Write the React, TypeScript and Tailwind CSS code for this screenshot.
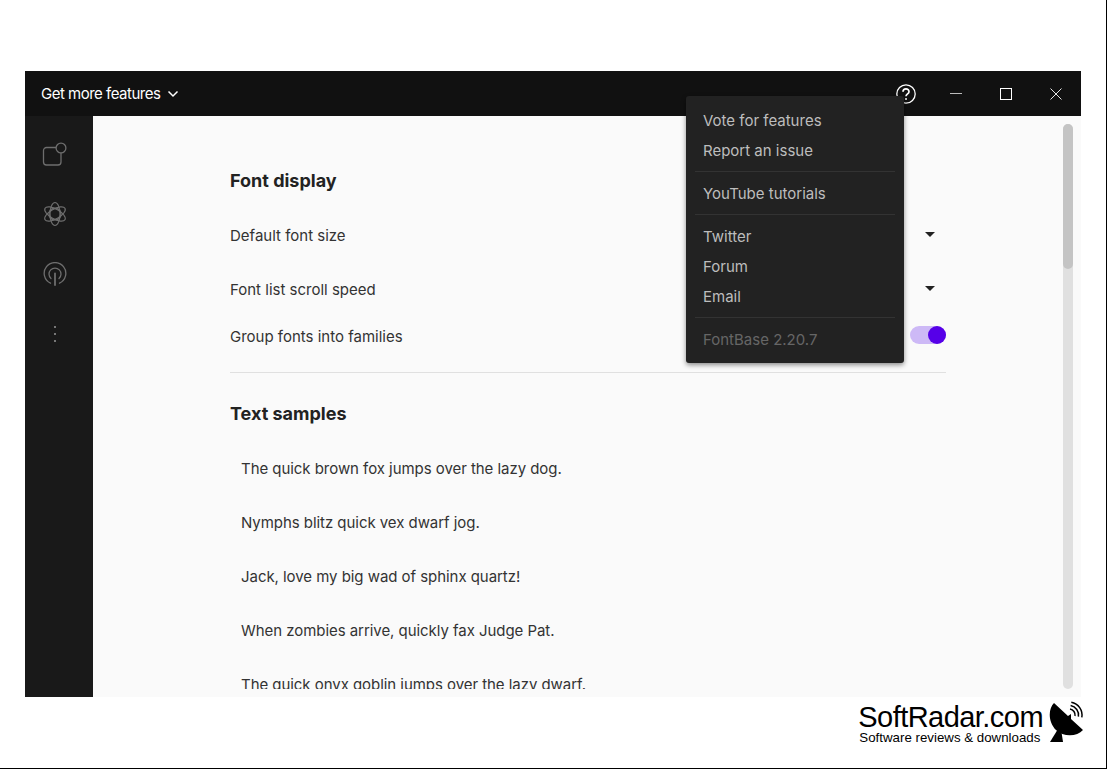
import React from 'react';

const samples = [
  'The quick brown fox jumps over the lazy dog.',
  'Nymphs blitz quick vex dwarf jog.',
  'Jack, love my big wad of sphinx quartz!',
  'When zombies arrive, quickly fax Judge Pat.',
  'The quick onyx goblin jumps over the lazy dwarf.',
];

const Caret = () => <div className="h-0 w-0 border-x-[5px] border-t-[5px] border-x-transparent border-t-[#222222]" />;

const SidebarIcons = () => (
  <div className="flex w-[60px] flex-col items-center text-[#6e6e6e]">
    {/* Shapes */}
    <svg width="26" height="26" viewBox="0 0 26 26" fill="none" stroke="currentColor" strokeWidth="1.3" className="mt-[26px]">
      <path d="M14 5.5H4.5a3 3 0 0 0-3 3V20a3 3 0 0 0 3 3H16a3 3 0 0 0 3-3V11" />
      <circle cx="19" cy="6" r="4.9" />
    </svg>
    {/* Atom */}
    <svg width="24" height="26" viewBox="0 0 24 26" fill="none" stroke="currentColor" strokeWidth="1.2" className="mt-[33px]">
      <ellipse cx="12" cy="13" rx="5" ry="11.5" transform="rotate(60 12 13)" />
      <ellipse cx="12" cy="13" rx="5" ry="11.5" transform="rotate(-60 12 13)" />
      <ellipse cx="12" cy="13" rx="5" ry="11.5" />
      <circle cx="12" cy="13" r="6" />
    </svg>
    {/* Broadcast */}
    <svg width="24" height="24" viewBox="0 0 24 24" fill="none" stroke="currentColor" strokeWidth="1.3" strokeLinecap="round" className="mt-[35px]">
      <path d="M7.5 21.2a10.8 10.8 0 1 1 9 0" />
      <path d="M8 16.5a6 6 0 1 1 8 0" />
      <path d="M12 11.5v11.5" strokeWidth="1.8" />
    </svg>
    <div className="mt-[40px] flex flex-col gap-[5px]">
      <div className="h-[2px] w-[2px] bg-[#777777]" />
      <div className="h-[2px] w-[2px] bg-[#777777]" />
      <div className="h-[2px] w-[2px] bg-[#777777]" />
    </div>
  </div>
);

const HelpMenu = () => (
  <div className="absolute left-[661px] top-[25px] z-10 h-[267px] w-[218px] rounded-[3px] bg-[#222222] px-[9px] pt-[10px] text-[15px] leading-[30px] text-[#bdbdbd] shadow-[0_2px_5px_rgba(0,0,0,0.45)]">
    <div className="border-b border-[#333333] pb-[5px] pl-2">
      <div>Vote for features</div>
      <div>Report an issue</div>
    </div>
    <div className="border-b border-[#333333] pb-[5px] pl-2 pt-[7px]">YouTube tutorials</div>
    <div className="border-b border-[#333333] pb-[5px] pl-2 pt-[7px]">
      <div>Twitter</div>
      <div>Forum</div>
      <div>Email</div>
    </div>
    <div className="pb-[5px] pl-2 pt-[7px] text-[#666666]">FontBase 2.20.7</div>
  </div>
);

const SettingRow = ({ label, children, height }: { label: string; children: React.ReactNode; height: string }) => (
  <div className={`flex items-center justify-between ${height}`}>
    <span>{label}</span>
    {children}
  </div>
);

export default function App() {
  return (
    <div className="relative h-[769px] w-[1107px] overflow-hidden border-b border-r border-black bg-white pl-[25px] pt-[71px] font-['Inter',sans-serif]">
      <div className="relative flex h-[626px] w-[1056px] flex-col">
        {/* Title bar */}
        <div className="flex h-[45px] shrink-0 items-center bg-[#111111] pl-4 text-white">
          <span className="text-[15px] leading-[20px] tracking-[-0.5px]">Get more features</span>
          <svg width="12" height="8" viewBox="0 0 12 8" fill="none" stroke="currentColor" strokeWidth="1.5" className="ml-[7px]">
            <path d="M1.5 1.5 6 6l4.5-4.5" />
          </svg>
          <svg width="22" height="22" viewBox="0 0 22 22" fill="none" stroke="currentColor" strokeWidth="1.3" className="ml-auto">
            <circle cx="11" cy="11" r="9.2" />
            <path d="M8 8.8a3 3 0 0 1 6 0c0 2-3 2.2-3 4.4" strokeWidth="1.7" />
            <circle cx="11" cy="16" r="1" fill="currentColor" stroke="none" />
          </svg>
          <div className="ml-[33px] h-px w-3 bg-[#bbbbbb]" />
          <div className="ml-[38px] h-3 w-3 border border-white" />
          <svg width="12" height="12" viewBox="0 0 12 12" stroke="#e5e5e5" strokeWidth="1" className="ml-[38px] mr-[19px]">
            <path d="M0.5 0.5 11.5 11.5M11.5 0.5 0.5 11.5" />
          </svg>
        </div>

        <div className="flex min-h-0 flex-1">
          <div className="w-[68px] shrink-0 bg-[#191919]">
            <SidebarIcons />
          </div>

          {/* Settings */}
          <div className="relative min-w-0 flex-1 bg-[#fafafa] py-2 pl-[137px] pr-[135px] text-[15px] text-[#333333]">
            <div className="h-full overflow-hidden pt-[42px]">
              <h2 className="text-[18px] font-bold leading-[30px] text-[#222222]">Font display</h2>
              <div className="mt-[13px]">
                <SettingRow label="Default font size" height="h-[54px]">
                  <div className="mb-1 mr-[11px]"><Caret /></div>
                </SettingRow>
                <SettingRow label="Font list scroll speed" height="h-[54px]">
                  <div className="mb-1 mr-[11px]"><Caret /></div>
                </SettingRow>
                <SettingRow label="Group fonts into families" height="h-[40px]">
                  <div className="mb-1 flex h-[18px] w-9 justify-end rounded-full bg-[#cdb9f6]">
                    <div className="h-[18px] w-[18px] rounded-full bg-[#5600e8]" />
                  </div>
                </SettingRow>
              </div>
              <div className="mt-[15px] h-px bg-[#e0e0e0]" />
              <h2 className="mt-[26px] text-[18px] font-bold leading-[30px] text-[#222222]">Text samples</h2>
              <div className="mt-[13px] pl-[11px] tracking-[-0.05px]">
                {samples.map((s) => (
                  <div key={s} className="flex h-[54px] items-center">{s}</div>
                ))}
              </div>
            </div>
            {/* Scrollbar */}
            <div className="absolute bottom-2 right-2 top-2 w-[10px] rounded-full bg-[#e0e0e0]">
              <div className="h-[145px] rounded-full bg-[#c4c4c4]" />
            </div>
          </div>
        </div>

        <HelpMenu />
      </div>

      {/* Watermark */}
      <div className="absolute right-[22px] top-[703px] flex items-start font-['Liberation_Sans',sans-serif] text-black">
        <div className="mr-[6px] flex flex-col">
          <span className="text-[29px] leading-[29px] tracking-[-0.55px]">SoftRadar.com</span>
          <span className="ml-[1px] text-[13.3px] leading-[12px]">Software reviews &amp; downloads</span>
        </div>
        <svg width="35" height="42" viewBox="0 0 35 42" className="-mt-[2px]">
          <path d="M5 2 L19 15 L22 13 L22 18 L34 29 C28 36 14 36 7 29 C-1 21 -1 8 5 2Z" fill="#000" />
          <path d="M9 28 1 41H14L12 28Z" fill="#000" />
          <path d="M21 8a6 6 0 0 1 5 7M21.6 4.6a9.5 9.5 0 0 1 7.8 11M22.3 1.2a13 13 0 0 1 10.5 15.1" fill="none" stroke="#000" strokeWidth="1.5" />
        </svg>
      </div>
    </div>
  );
}
